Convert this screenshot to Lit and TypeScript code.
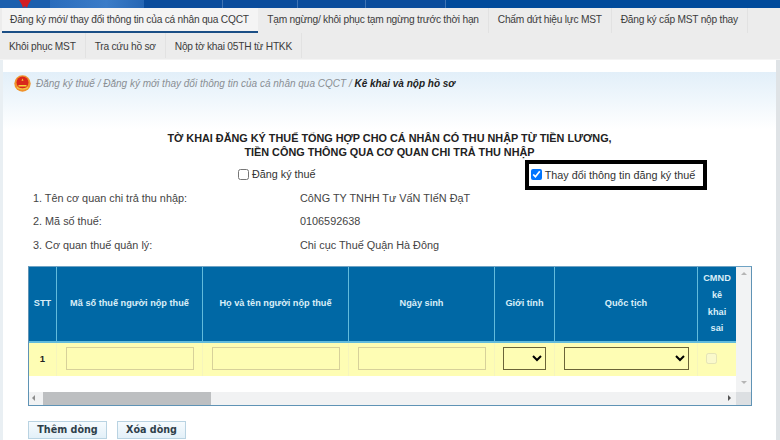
import { LitElement, html, css } from "lit";
import { customElement } from "lit/decorators.js";

const row1 = ["Đăng ký mới/ thay đổi thông tin của cá nhân qua CQCT", "Tạm ngừng/ khôi phục tạm ngừng trước thời hạn", "Chấm dứt hiệu lực MST", "Đăng ký cấp MST nộp thay"];
const row2 = ["Khôi phục MST", "Tra cứu hồ sơ", "Nộp tờ khai 05TH từ HTKK"];

@customElement("app-root")
export class AppRoot extends LitElement {
  static styles = css`
    :host { display: block; width: 780px; height: 440px; overflow: hidden; background: #fff; font-family: "Liberation Sans", Arial, sans-serif; color: #333; font-size: 11px; }
    .topbar { height: 8px; display: flex; background: #004a9b; }
    .topbar div { border-right: 1px solid #3f74b4; }
    .logo { width: 50px; background: #1b5fae; display: flex; justify-content: center; border-right: 0 !important; }
    .logo svg { display: block; }
    .glow { width: 94px; background: linear-gradient(90deg, #2a6cbc, #3a7cc8 60%, #2566b4); border-right: 0 !important; }
    .seg { background: #0a4c9c; }
    .tabs { background: #ececec; height: 51px; border-bottom: 1px solid #f4f4f4; }
    .tabrow { height: 25px; display: flex; }
    .tab { padding: 0 9px; display: flex; align-items: center; font-size: 10.2px; letter-spacing: -.23px; color: #3c3c3c; border-right: 1px solid #e2e2e2; white-space: nowrap; padding-bottom: 2px; }
    .tab.active { margin-left: 2px; padding-left: 8px; background: #f4f4f4; border-bottom: 2px solid #1b4f86; border-right: 0; padding-bottom: 0; }
    .tab.active + .tab { padding-left: 9.5px; }
    .row2 .tab { padding-top: 3px; }
    .page { padding: 0 4px 0 3px; background: linear-gradient(90deg, #e9eff3 0 3px, transparent 3px, transparent 776px, #dfe3e6 776px); height: 381px; }
    .spacer { height: 12px; background: #fff; }
    .crumb { height: 54px; padding: 3px 0 0 11px; display: flex; align-items: flex-start; gap: 5px; background: linear-gradient(#e2eff9, #f0f7fc 50%, #fff); font-size: 10px; font-style: italic; color: #8a8f94; }
    .crumb svg { flex: none; }
    .crumb span { margin-top: 3px; white-space: nowrap; }
    .crumb b { color: #222; }
    .title { margin-top: 2px; text-align: center; font-weight: bold; font-size: 10.85px; line-height: 14px; color: #222; }
    .checks { height: 27px; display: flex; align-items: center; font-size: 10.8px; }
    .checks label { display: flex; align-items: center; gap: 3px; white-space: nowrap; }
    .checks input { margin: 0; width: 11px; height: 11px; }
    .c1 { margin-left: 235px; margin-top: 3px; }
    .box { margin-left: 209px; width: 182px; height: 30px; box-sizing: border-box; border: 4px solid #000; padding-left: 2px; display: flex; align-items: center; margin-top: 4px; background: #fff; }
    .info { margin: 0 0 0 30px; display: grid; grid-template-columns: 267px 1fr; grid-auto-rows: 23.5px; align-items: center; font-size: 10.85px; color: #444; }
    .grid { margin: 9px 0 0 25px; width: 724px; height: 140px; box-sizing: border-box; border: 1px solid #5f93b5; border-top-color: #6fa3c4; display: grid; grid-template-columns: 1fr 15px; grid-template-rows: 1fr 13px; background: #fff; }
    .table { display: grid; grid-template-columns: 28px 146px 146px 146px 60px 143px 38px; grid-template-rows: 76px 33px; align-content: start; }
    .th { background: #0068a5; color: #d9eef8; font: bold 9.2px "Liberation Sans", sans-serif; display: flex; align-items: center; justify-content: center; text-align: center; border-right: 1px solid #62bbdc; border-bottom: 2px solid #62bbdc; box-sizing: border-box; line-height: 16.6px; }
    .th:nth-child(7) { border-right: 0; padding: 0 4px; }
    .td { background: #fefdb4; color: #222; font-size: 9.5px; font-weight: bold; display: flex; align-items: center; justify-content: center; border-right: 1px solid #f6f5bc; box-sizing: border-box; padding-bottom: 2px; }
    .td:last-child { border-right: 0; padding-right: 12px; }
    .td input[type="text"] { width: 128px; height: 23px; box-sizing: border-box; background: #fefdb4; border: 1px solid #d7d19a; padding: 0; outline: none; }
    select { appearance: auto; box-sizing: border-box; height: 23px; background-color: #fefdb4; border: 1px solid #6b6438; border-radius: 0; padding: 0; margin: 0; }
    .s1 { width: 43px; }
    .s2 { width: 125px; }
    .td input[type="checkbox"] { margin: 0; width: 11px; height: 11px; opacity: .55; }
    .vbar { grid-row: 1; grid-column: 2; background: #f2f3f4; display: flex; flex-direction: column; justify-content: space-between; align-items: center; padding: 5px 0 8px; }
    .hbar { grid-row: 2; grid-column: 1; background: #f1f2f3; display: flex; align-items: center; }
    .corner { background: #dcdfe2; }
    .arrow { width: 0; height: 0; border-style: solid; }
    .up { border-width: 0 3px 3px; border-color: transparent transparent #b5b5b5; }
    .down { border-width: 3px 3px 0; border-color: #b5b5b5 transparent transparent; }
    .left { border-width: 3px 3px 3px 0; border-color: transparent #8d8d8d transparent transparent; margin: 0 8px 0 3px; }
    .right { border-width: 3px 0 3px 3px; border-color: transparent transparent transparent #555; margin: 0 5px 0 auto; }
    .thumb { width: 168px; height: 13px; background: #bdbfc1; }
    .btns { margin: 15px 0 0 25px; display: flex; gap: 10px; }
    button { height: 18px; padding: 0; box-sizing: border-box; border: 1px solid #b9d3e2; background: linear-gradient(#f6fbfe, #e3f0f8); font: bold 9.6px "DejaVu Sans", sans-serif; color: #2f3f4a; border-radius: 0; }
    .b1 { width: 79px; }
    .b2 { width: 69px; }
  `;

  render() {
    return html`
      <div class="topbar">
        <div class="logo">
          <svg width="14" height="8" viewBox="0 0 14 8"><path d="M1 0h12l-3 5-1 3-2-2-2 2-1-3z" fill="#d01c24"/></svg>
        </div>
        <div class="glow"></div>
        <div class="seg" style="width:78px"></div>
        <div class="seg" style="width:74px"></div>
        <div class="seg" style="width:67px"></div>
        <div class="seg" style="width:79px"></div>
      </div>
      <div class="tabs">
        <div class="tabrow">
          ${row1.map((t, i) => html`<div class="tab ${i === 0 ? "active" : ""}">${t}</div>`)}
        </div>
        <div class="tabrow row2">
          ${row2.map((t) => html`<div class="tab">${t}</div>`)}
        </div>
      </div>
      <div class="page">
        <div class="spacer"></div>
        <div class="crumb">
          <svg width="17" height="17" viewBox="0 0 17 17">
            <circle cx="8.5" cy="8.5" r="8.2" fill="#f0932b"/>
            <circle cx="8.5" cy="7.5" r="6" fill="#d9261c"/>
            <path d="M8.5 3.5l1 2.2h-2zM4.5 10h8v1.4h-8z" fill="#f6d23a"/>
            <path d="M3 12.5c3 2 8 2 11 0" stroke="#f8d552" fill="none"/>
          </svg>
          <span>Đăng ký thuế / Đăng ký mới thay đổi thông tin của cá nhân qua CQCT / <b>Kê khai và nộp hồ sơ</b></span>
        </div>
        <div class="title">TỜ KHAI ĐĂNG KÝ THUẾ TỔNG HỢP CHO CÁ NHÂN CÓ THU NHẬP TỪ TIỀN LƯƠNG,<br />TIỀN CÔNG THÔNG QUA CƠ QUAN CHI TRẢ THU NHẬP</div>
        <div class="checks">
          <label class="c1"><input type="checkbox" />Đăng ký thuế</label>
          <div class="box"><label><input type="checkbox" checked />Thay đổi thông tin đăng ký thuế</label></div>
        </div>
        <div class="info">
          <div>1. Tên cơ quan chi trả thu nhập:</div><div>CôNG TY TNHH Tư VấN TIếN ĐạT</div>
          <div>2. Mã số thuế:</div><div>0106592638</div>
          <div>3. Cơ quan thuế quản lý:</div><div>Chi cục Thuế Quận Hà Đông</div>
        </div>
        <div class="grid">
          <div class="table">
            <div class="th">STT</div>
            <div class="th">Mã số thuế người nộp thuế</div>
            <div class="th">Họ và tên người nộp thuế</div>
            <div class="th">Ngày sinh</div>
            <div class="th">Giới tính</div>
            <div class="th">Quốc tịch</div>
            <div class="th">CMND kê khai sai</div>
            <div class="td">1</div>
            <div class="td"><input type="text" /></div>
            <div class="td"><input type="text" /></div>
            <div class="td"><input type="text" /></div>
            <div class="td"><select class="s1"><option></option></select></div>
            <div class="td"><select class="s2"><option></option></select></div>
            <div class="td"><input type="checkbox" disabled /></div>
          </div>
          <div class="vbar"><div class="arrow up"></div><div class="arrow down"></div></div>
          <div class="hbar"><div class="arrow left"></div><div class="thumb"></div><div class="arrow right"></div></div>
          <div class="corner"></div>
        </div>
        <div class="btns">
          <button class="b1">Thêm dòng</button>
          <button class="b2">Xóa dòng</button>
        </div>
      </div>
    `;
  }
}
